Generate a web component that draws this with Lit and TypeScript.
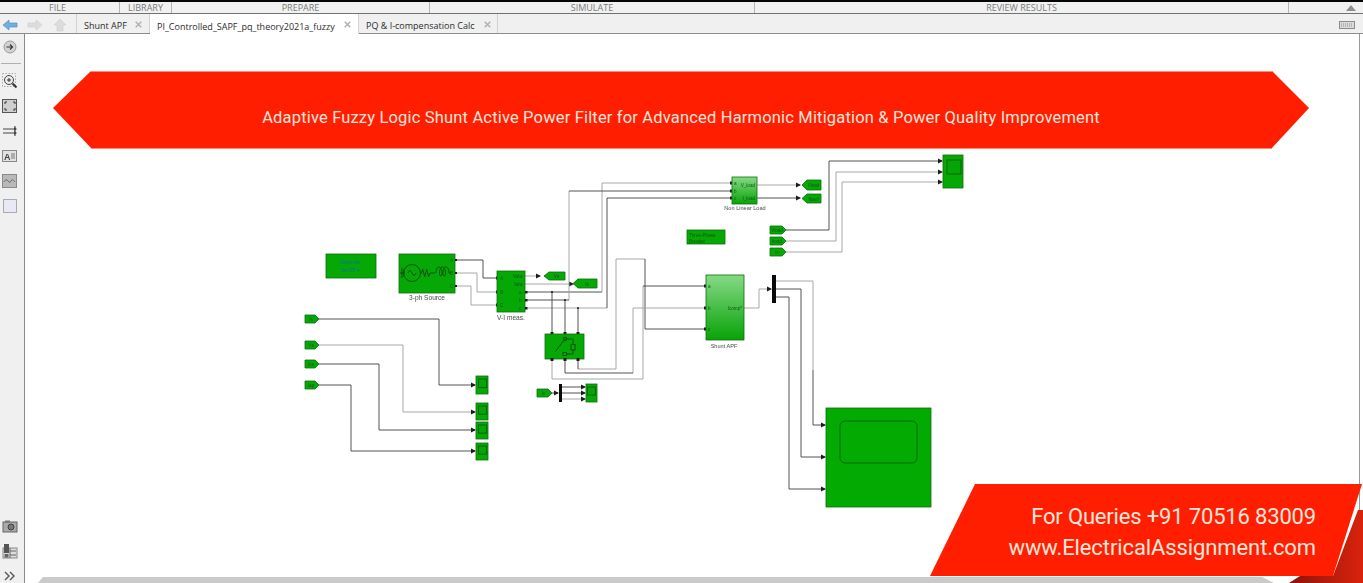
import { LitElement, html, css, svg } from "lit";
import { customElement } from "lit/decorators.js";

type Wire = { p: number[]; c: "g" | "d"; end?: "a" | "s" };

const WIRES: Wire[] = [
  { p: [455, 260, 483, 260, 483, 278, 497, 278], c: "d", end: "s" },
  { p: [455, 273, 477, 273, 477, 292, 497, 292], c: "g", end: "s" },
  { p: [455, 286, 471, 286, 471, 305, 497, 305], c: "g", end: "s" },
  { p: [525, 276, 540, 276], c: "g", end: "a" },
  { p: [525, 284, 573, 284], c: "g", end: "a" },
  { p: [525, 292, 602, 292], c: "d" },
  { p: [602, 292, 602, 183, 731, 183], c: "g", end: "s" },
  { p: [569, 300, 569, 191], c: "g" },
  { p: [525, 300, 569, 300], c: "d" },
  { p: [569, 191, 731, 191], c: "d", end: "s" },
  { p: [525, 308, 607, 308], c: "g" },
  { p: [607, 308, 607, 198, 731, 198], c: "d", end: "s" },
  { p: [757, 185, 800, 185], c: "g", end: "a" },
  { p: [757, 198, 800, 198], c: "d", end: "a" },
  { p: [786, 230, 829, 230, 829, 161, 942, 161], c: "d", end: "a" },
  { p: [786, 241, 836, 241, 836, 172, 942, 172], c: "g", end: "a" },
  { p: [786, 252, 842, 252, 842, 182, 942, 182], c: "g", end: "a" },
  { p: [552, 292, 552, 334], c: "d", end: "s" },
  { p: [565, 300, 565, 334], c: "d", end: "s" },
  { p: [578, 308, 578, 334], c: "d", end: "s" },
  { p: [578, 369, 616, 369, 616, 259, 645, 259], c: "g" },
  { p: [578, 359, 578, 369], c: "d" },
  { p: [645, 259, 645, 329, 705, 329], c: "d", end: "s" },
  { p: [633, 373, 633, 308, 705, 308], c: "g", end: "s" },
  { p: [565, 359, 565, 373, 633, 373], c: "d" },
  { p: [552, 359, 552, 379, 643, 379, 643, 286], c: "g" },
  { p: [643, 286, 705, 286], c: "d", end: "s" },
  { p: [744, 308, 759, 308, 759, 289, 771, 289], c: "g", end: "a" },
  { p: [776, 281, 813, 281, 813, 370], c: "g" },
  { p: [813, 370, 813, 425, 825, 425], c: "d", end: "a" },
  { p: [776, 289, 801, 289, 801, 457, 825, 457], c: "d", end: "a" },
  { p: [776, 297, 789, 297, 789, 489, 825, 489], c: "d", end: "a" },
  { p: [319, 319, 439, 319, 439, 385, 475, 385], c: "d", end: "a" },
  { p: [319, 345, 403, 345, 403, 412, 475, 412], c: "g", end: "a" },
  { p: [319, 364, 379, 364, 379, 430, 475, 430], c: "d", end: "a" },
  { p: [319, 385, 351, 385, 351, 451, 475, 451], c: "d", end: "a" },
  { p: [552, 393, 558, 393], c: "d", end: "a" },
  { p: [562, 387, 585, 387], c: "d", end: "a" },
  { p: [562, 393, 585, 393], c: "d", end: "a" },
  { p: [562, 399, 585, 399], c: "g", end: "a" },
];

const SCOPES = [
  [476, 376, 12, 18],
  [476, 403, 12, 17],
  [476, 422, 12, 17],
  [476, 443, 12, 17],
];

// x, y, width, height, label; the point faces the wire side.
const TAGS_RIGHT: [number, number, number, number, string][] = [
  [305, 315, 14, 8, "Is"],
  [305, 341, 14, 8, "Vs"],
  [305, 360, 14, 8, "Ica"],
  [305, 381, 14, 8, "Iap"],
  [770, 226, 16, 8, "Vload"],
  [770, 237, 16, 8, "Iload"],
  [770, 248, 16, 8, "Is"],
  [537, 389, 15, 8, "Is"],
];
const TAGS_LEFT: [number, number, number, number, string][] = [
  [544, 272, 21, 8, "Vs"],
  [573, 279, 24, 9, "Is"],
  [802, 180, 19, 10, "Vload"],
  [802, 194, 19, 9, "Iload"],
];

const wirePaths = () =>
  WIRES.map((w) => {
    const pts = w.p.join(" ");
    const [x, y] = w.p.slice(-2);
    const [px, py] = w.p.slice(-4, -2);
    let tip = svg``;
    if (w.end === "a") {
      tip = svg`<path class="arrow" d="M${x + 1} ${y}l-5 -2.4v4.8z" />`;
    } else if (w.end === "s") {
      tip = px === x && py < y
        ? svg`<rect class="arrow" x=${x - 1.5} y=${y - 2} width="3" height="3" />`
        : svg`<rect class="arrow" x=${x - 1} y=${y - 1.5} width="3" height="3" />`;
    }
    return svg`<polyline class=${w.c === "g" ? "wire-g" : "wire-d"} points=${pts} />${tip}`;
  });

const scope = (x: number, y: number, w: number, h: number) => svg`
  <rect class="blk" x=${x} y=${y} width=${w} height=${h} />
  <rect class="screen" x=${x + 2.5} y=${y + 3} width=${w - 4} height=${h * 0.48} />`;

const tagR = ([x, y, w, h, t]: [number, number, number, number, string]) => svg`
  <path class="blk" d="M${x} ${y}h${w - 4}l4 ${h / 2}l-4 ${h / 2}h${-(w - 4)}z" />
  <text class="tiny" x=${x + w / 2 - 1} y=${y + h / 2 + 2} text-anchor="middle">${t}</text>`;

const tagL = ([x, y, w, h, t]: [number, number, number, number, string]) => svg`
  <path class="blk" d="M${x + w} ${y}h${-(w - 5)}l-5 ${h / 2}l5 ${h / 2}h${w - 5}z" />
  <text class="tiny" x=${x + w / 2 + 2} y=${y + h / 2 + 2} text-anchor="middle">${t}</text>`;

const label = (x: number, y: number, t: string, big = false) =>
  svg`<text class=${big ? "cap-lg" : "cap"} x=${x} y=${y} text-anchor="middle">${t}</text>`;
const tiny = (x: number, y: number, t: string) =>
  svg`<text class="tiny" x=${x} y=${y}>${t}</text>`;

const diagram = () => svg`
  <defs>
    <linearGradient id="sub" x1="0" y1="0" x2="0" y2="1">
      <stop offset="0" stop-color="#86d986" />
      <stop offset="1" stop-color="#08a308" />
    </linearGradient>
  </defs>
  ${wirePaths()}

  <rect class="blk" x="326" y="254" width="50" height="24" />
  <text class="note" x="351" y="264" text-anchor="middle">Discrete,</text>
  <text class="note" x="351" y="272" text-anchor="middle">5e-05 s.</text>

  <rect class="blk" x="399" y="254" width="56" height="39" />
  <path class="sym" d="M400 273h4M402 268v10M404 269.5v7M420 273h1.5M449 273h2" />
  <circle class="sym" cx="412" cy="273" r="8.5" />
  <path class="sym" d="M408 273q2 -5 4 0t4 0M420 273h1.5l1.2 -3.8l2 7.6l2 -7.6l2 7.6l1.3 -3.8h5" />
  <path class="sym" d="M436 273c0 -8 6 -8 6 0c0 4 -2.5 4 -2.5 0c0 -8 6 -8 6 0c0 4 -2.5 4 -2.5 0c0 -8 6 -8 6 0" />
  ${tiny(450, 262, "A")}${tiny(450, 275, "B")}${tiny(450, 288, "C")}
  <rect class="arrow" x="455" y="259" width="2" height="2" />
  <rect class="arrow" x="455" y="272" width="2" height="2" />
  <rect class="arrow" x="455" y="285" width="2" height="2" />
  ${label(427, 300, "3-ph Source", true)}

  <rect class="blk" x="497" y="271" width="28" height="41" />
  ${tiny(500, 280, "A")}${tiny(500, 294, "B")}${tiny(500, 307, "C")}
  <text class="tiny" x="523" y="278" text-anchor="end">Vabc</text>
  <text class="tiny" x="523" y="286" text-anchor="end">Iabc</text>
  ${tiny(519, 294, "a")}${tiny(519, 302, "b")}${tiny(519, 310, "c")}
  ${label(511, 320, "V-I meas.", true)}
  <rect class="arrow" x="525" y="291" width="2.5" height="2.5" />
  <rect class="arrow" x="525" y="299" width="2.5" height="2.5" />
  <rect class="arrow" x="525" y="307" width="2.5" height="2.5" />
  <circle class="dot" cx="552" cy="292" r="1" />
  <circle class="dot" cx="565" cy="300" r="1" />
  <circle class="dot" cx="578" cy="308" r="1" />

  <rect class="blk" x="545" y="334" width="39" height="25" />
  <path class="sym" d="M555 352L565 339h8v5M573 350v4h-7" />
  <circle class="sym" cx="565" cy="339" r="1.8" />
  <rect class="sym" x="571" y="344.5" width="4" height="5.5" />
  <rect class="sym" x="563" y="352.5" width="3.5" height="3" />
  <rect class="arrow" x="550.5" y="358" width="3" height="3" />
  <rect class="arrow" x="563.5" y="358" width="3" height="3" />
  <rect class="arrow" x="576.5" y="358" width="3" height="3" />

  <rect class="sub" x="732" y="177" width="25" height="27" />
  ${tiny(734, 185, "a")}${tiny(734, 193, "b")}${tiny(734, 200, "c")}
  <text class="tiny" x="755" y="187" text-anchor="end">V_load</text>
  <text class="tiny" x="755" y="200" text-anchor="end">I_load</text>
  ${label(745, 210, "Non Linear Load")}

  <rect class="blk" x="687" y="230" width="38" height="14" />
  <text class="tiny" x="689" y="236.5">Three-Phase</text>
  <text class="tiny" x="689" y="242.5">Breaker</text>

  <rect class="sub" x="706" y="275" width="38" height="65" />
  ${tiny(708, 288, "a")}${tiny(708, 310, "b")}${tiny(708, 331, "c")}
  <text class="tiny" x="742" y="310" text-anchor="end">Icomp*</text>
  ${label(724, 348, "Shunt APF")}

  <rect class="bus" x="772" y="275" width="4" height="28" />
  <rect class="bus" x="559" y="384" width="3" height="18" />

  ${SCOPES.map((s) => scope(s[0], s[1], s[2], s[3]))}
  <rect class="blk" x="586" y="384" width="11" height="18" />
  <rect class="screen" x="587.5" y="387" width="8" height="8" />
  <rect class="blk" x="943" y="155" width="20" height="33" />
  <rect class="screen" x="947" y="160" width="14" height="14" />
  <rect class="big" x="826" y="408" width="105" height="99" />
  <rect class="big-screen" x="840" y="421" width="77" height="42" rx="5" />

  ${TAGS_RIGHT.map(tagR)}
  ${TAGS_LEFT.map(tagL)}
`;

const ICONS = {
  back: svg`<path fill="#6fb0de" stroke="#4a86b8" stroke-width=".6" d="M1 8l6-5v3h8v4H7v3z" />`,
  fwd: svg`<path fill="#dcdcdc" stroke="#cfcfcf" stroke-width=".6" d="M15 8l-6-5v3H1v4h8v3z" />`,
  up: svg`<path fill="#dcdcdc" stroke="#cfcfcf" stroke-width=".6" d="M8 2l6 6h-3v6H5V8H2z" />`,
  go: svg`<circle cx="8" cy="8" r="6" fill="#d2d2d2" stroke="#9a9a9a" /><path fill="none" stroke="#333" stroke-width="1.1" d="M4.5 8h6M8 5.5L10.5 8L8 10.5" />`,
  zoom: svg`<rect x=".5" y=".5" width="13" height="13" fill="none" stroke="#aaa" stroke-dasharray="1.5 1.5" /><circle cx="7" cy="7" r="4.5" fill="#e8efe8" stroke="#444" /><path stroke="#333" stroke-width="1" d="M5 7h4M7 5v4" /><path stroke="#333" stroke-width="2" d="M10.5 10.5l4 4" />`,
  fit: svg`<rect x=".5" y="1.5" width="14" height="13" fill="#cfcfcf" stroke="#555" /><path fill="none" stroke="#333" d="M3 6V4h2M13 6V4h-2M3 10v2h2M13 10v2h-2" />`,
  route: svg`<path fill="none" stroke="#444" stroke-width="1.1" d="M1 6h12M1 10h12M13 3v10" /><path fill="#444" d="M15 6l-3-2v4zM15 10l-3-2v4z" />`,
  text: svg`<rect x=".5" y="2.5" width="14" height="11" fill="#e2e2e2" stroke="#888" /><text class="ico-a" x="2" y="11.5">A</text><path stroke="#777" d="M9 6h4M9 8h4M9 10h4" />`,
  image: svg`<rect x=".5" y="1.5" width="14" height="13" fill="#b9b9b9" stroke="#8a8a8a" /><path fill="none" stroke="#6f6f6f" d="M2 9q2-4 4-1t3 0t4 1" />`,
  box: svg`<rect x="1.5" y="1.5" width="13" height="13" fill="#e9e9f6" stroke="#a9a9b8" />`,
  camera: svg`<rect x="1" y="4" width="14" height="10" fill="#aaa" stroke="#666" /><rect x="3" y="2.5" width="5" height="2" fill="#777" /><circle cx="9" cy="9" r="3" fill="#777" stroke="#444" />`,
  grid: svg`<rect x="1" y="5" width="14" height="10" fill="#ddd" stroke="#888" /><rect x="2" y="1" width="5" height="9" fill="#555" /><path stroke="#666" d="M8 8h6M8 12h6M8 5v10" /><rect x="2.5" y="11" width="4" height="3.5" fill="#666" />`,
  more: svg`<path fill="none" stroke="#555" stroke-width="1.4" d="M3 4l4 4l-4 4M8 4l4 4l-4 4" />`,
  keys: svg`<rect x=".5" y="4.5" width="15" height="7" fill="#dcdcdc" stroke="#8c8c8c" /><path stroke="#8c8c8c" stroke-dasharray="1 1" d="M2 7h12M2 9h12" />`,
  close: svg`<path stroke="#b0b0b0" stroke-width="2.6" d="M3 3l10 10M13 3L3 13" />`,
};

const ic = (body: unknown, size = 16) =>
  html`<svg class="ic" width=${size} height=${size} viewBox="0 0 16 16">${body}</svg>`;

@customElement("app-root")
export class AppRoot extends LitElement {
  static styles = css`
    :host {
      display: block;
      position: relative;
      width: 1363px;
      height: 583px;
      overflow: hidden;
      background: #fff;
      font-family: "Open Sans", "Liberation Sans", sans-serif;
    }
    .strip { height: 2px; background: #050505; }
    .ribbon {
      display: flex;
      height: 11px;
      background: #f1f1f1;
      border-bottom: 1px solid #6f7273;
      color: #7b7b7b;
      font-size: 9px;
      line-height: 11px;
    }
    .ribbon div { text-align: center; border-right: 1px solid #b5b5b5; box-sizing: border-box; }
    .r-file { width: 120px; padding-right: 4px; }
    .r-lib { width: 52px; }
    .r-prep { width: 258px; }
    .r-sim { width: 325px; }
    .r-rev { width: 534px; }
    .ribbon .r-end { flex: 1; border: 0; display: flex; justify-content: flex-end; padding-right: 7px; }
    .collapse { width: 0; height: 0; margin-top: 3px; border: 5px solid transparent; border-top: 0; border-bottom: 6px solid #8e8e8e; }
    .tabs {
      display: flex;
      height: 19px;
      background: #f0f0f0;
      border-bottom: 1px solid #8b8b8b;
      font-size: 9px;
      line-height: 12px;
      color: #2c2c2c;
    }
    .nav { display: flex; width: 76px; align-items: center; gap: 9px; padding: 2px 0 0 2px; box-sizing: border-box; }
    .tab { display: flex; justify-content: space-between; align-items: center; box-sizing: border-box; padding: 0 6px 0 7px; border-right: 1px solid #d2d2d2; }
    .tab span { padding-top: 5px; }
    .tab svg { flex: none; margin-top: 1px; }
    .t1 { width: 74px; border-left: 1px solid #d2d2d2; }
    .t2 { width: 209px; background: #fff; height: 20px; }
    .t3 { width: 139px; padding-right: 5px; }
    .keys { display: flex; align-items: center; margin-left: auto; margin-right: 8px; padding-top: 3px; }
    .main { display: flex; height: 549px; }
    .tools {
      flex: none;
      width: 25px;
      height: 554px;
      box-sizing: border-box;
      display: flex;
      flex-direction: column;
      align-items: stretch;
      background: #f0f0f0;
      border-right: 1px solid #8a8a8a;
    }
    .tools .ic { filter: blur(0.3px); }
    .btn { height: 25px; display: flex; align-items: center; justify-content: center; flex: none; padding-right: 4px; }
    .sep { height: 1px; margin: 4px 3px 4px 1px; background: #b0b0b0; flex: none; }
    .spacer { flex: 1; }
    .canvas { flex: none; width: 1335px; height: 549px; border-right: 1px solid #9a9a9a; box-sizing: border-box; }
    .canvas svg { display: block; filter: blur(0.35px); }
    .wire-g, .wire-d { fill: none; stroke-width: 0.9; }
    .wire-g { stroke: #9e9e9e; }
    .wire-d { stroke: #404040; }
    .arrow, .dot { fill: #1c1c1c; }
    .blk { fill: #05a805; stroke: #0b6f0b; stroke-width: 0.8; }
    .big { fill: #02aa02; stroke: #0b6f0b; stroke-width: 0.8; }
    .big-screen { fill: #02aa02; stroke: #0d5f0d; stroke-width: 0.9; }
    .sub { fill: url(#sub); stroke: #0b6f0b; stroke-width: 0.8; }
    .bus { fill: #0a0a0a; }
    .screen { fill: #06a506; stroke: #0d5f0d; stroke-width: 0.9; }
    .sym { fill: none; stroke: #0c4a0c; stroke-width: 0.9; }
    .tiny { font: 4.6px "Liberation Sans", sans-serif; fill: #0f5a12; }
    .note { font: 5.6px "Liberation Sans", sans-serif; fill: #0d6fa6; }
    .cap { font: 5.6px "Liberation Sans", sans-serif; fill: #4a4a4a; }
    .cap-lg { font: 6.6px "Liberation Sans", sans-serif; fill: #4a4a4a; }
    .ico-a { font: bold 9px "Liberation Sans", sans-serif; fill: #444; }
    .banner {
      position: absolute;
      left: 53px;
      top: 71px;
      width: 1256px;
      height: 78px;
      padding-top: 14px;
      box-sizing: border-box;
      display: flex;
      align-items: center;
      justify-content: center;
      background: #ff1f00;
      box-shadow: inset 0 1px 0 #ff8a72, inset 0 -1px 0 #ff8a72;
      clip-path: polygon(38px 0, 1219px 0, 1256px 37px, 1218px 100%, 39px 100%, 0 37px);
      color: #f7e4dc;
      font: 400 16.5px Roboto, "Liberation Sans", sans-serif;
      letter-spacing: 0.17px;
      white-space: nowrap;
    }
    .scroll {
      position: absolute;
      left: 38px;
      top: 577px;
      width: 1236px;
      height: 6px;
      background: #cacaca;
      clip-path: polygon(5px 0, 1224px 0, 1236px 100%, 0 100%);
    }
    .fold {
      position: absolute;
      left: 1289px;
      top: 510px;
      width: 74px;
      height: 73px;
      background: linear-gradient(90deg, #8c1409, #d9230d);
      clip-path: polygon(69px 0, 100% 0, 100% 100%, 0 100%, 11px 66px, 44px 66px);
    }
    .query {
      position: absolute;
      left: 930px;
      top: 484px;
      width: 433px;
      height: 92px;
      padding: 17px 47px 0 0;
      box-sizing: border-box;
      display: flex;
      flex-direction: column;
      align-items: flex-end;
      background: #ff1f00;
      clip-path: polygon(45px 0, 432px 0, 403px 100%, 0 100%);
      color: #fbe6dc;
      font: 400 22px/31px Roboto, "Liberation Sans", sans-serif;
      white-space: nowrap;
    }
    .q1 { letter-spacing: -0.17px; }
    .q2 { letter-spacing: -0.1px; }
  `;

  render() {
    return html`
      <div class="strip"></div>
      <div class="ribbon">
        <div class="r-file">FILE</div>
        <div class="r-lib">LIBRARY</div>
        <div class="r-prep">PREPARE</div>
        <div class="r-sim">SIMULATE</div>
        <div class="r-rev">REVIEW RESULTS</div>
        <div class="r-end"><span class="collapse"></span></div>
      </div>
      <div class="tabs">
        <div class="nav">${ic(ICONS.back)}${ic(ICONS.fwd)}${ic(ICONS.up)}</div>
        <div class="tab t1"><span>Shunt APF</span>${ic(ICONS.close, 9)}</div>
        <div class="tab t2"><span>PI_Controlled_SAPF_pq_theory2021a_fuzzy</span>${ic(ICONS.close, 9)}</div>
        <div class="tab t3"><span>PQ &amp; I-compensation Calc</span>${ic(ICONS.close, 9)}</div>
        <div class="keys">${ic(ICONS.keys, 16)}</div>
      </div>
      <div class="main">
        <div class="tools">
          <div class="btn">${ic(ICONS.go)}</div>
          <div class="sep"></div>
          <div class="btn">${ic(ICONS.zoom)}</div>
          <div class="btn">${ic(ICONS.fit)}</div>
          <div class="btn">${ic(ICONS.route)}</div>
          <div class="btn">${ic(ICONS.text)}</div>
          <div class="btn">${ic(ICONS.image)}</div>
          <div class="btn">${ic(ICONS.box)}</div>
          <div class="spacer"></div>
          <div class="btn">${ic(ICONS.camera)}</div>
          <div class="btn">${ic(ICONS.grid)}</div>
          <div class="btn">${ic(ICONS.more)}</div>
        </div>
        <div class="canvas">
          <svg width="1334" height="549" viewBox="25 34 1334 549">${diagram()}</svg>
        </div>
      </div>
      <div class="scroll"></div>
      <div class="banner">Adaptive Fuzzy Logic Shunt Active Power Filter for Advanced Harmonic Mitigation &amp; Power Quality Improvement</div>
      <div class="fold"></div>
      <div class="query">
        <span class="q1">For Queries +91 70516 83009</span>
        <span class="q2">www.ElectricalAssignment.com</span>
      </div>
    `;
  }
}
